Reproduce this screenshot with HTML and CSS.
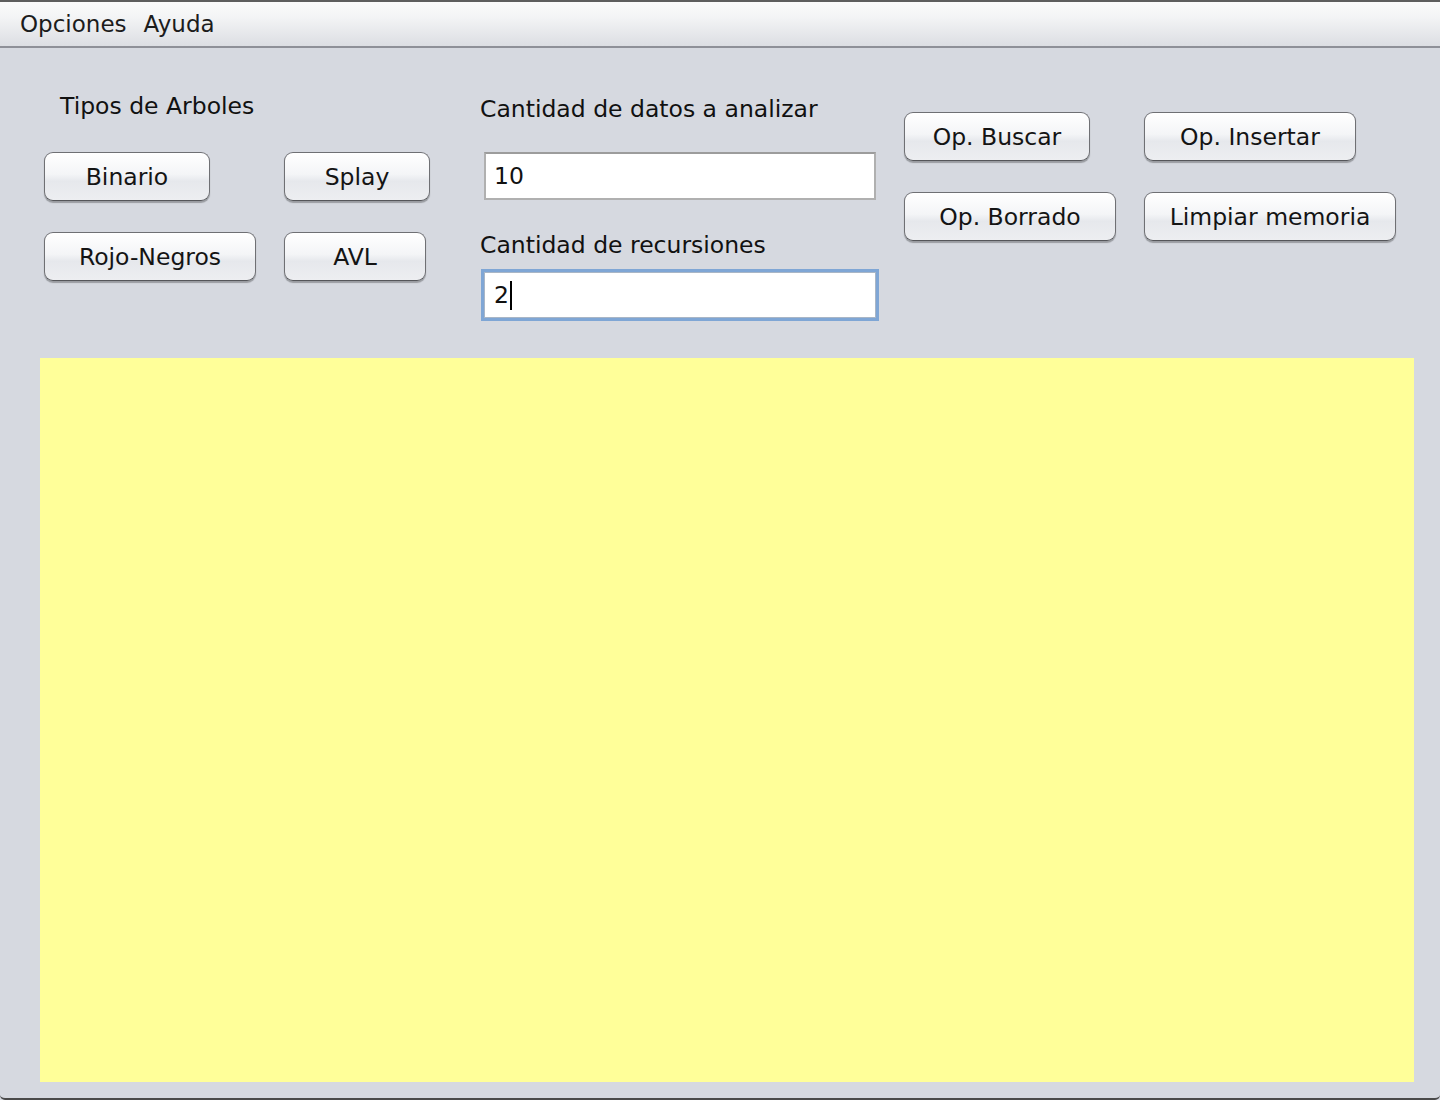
FILE: index.html
```html
<!DOCTYPE html>
<html lang="es">
<head>
<meta charset="utf-8">
<title>Arboles</title>
<link rel="stylesheet" href="styles.css">
</head>
<body>
<div class="window">
  <div class="menubar">
    <span class="menu-item">Opciones</span>
    <span class="menu-item">Ayuda</span>
  </div>
  <div class="top">
    <div class="col-left">
      <div class="label label-tipos">Tipos de Arboles</div>
      <div class="btn-grid btn-grid-left">
        <button class="btn w-binario">Binario</button>
        <button class="btn w-splay">Splay</button>
        <button class="btn w-rojo">Rojo-Negros</button>
        <button class="btn w-avl">AVL</button>
      </div>
    </div>
    <div class="col-mid">
      <div class="label label-datos">Cantidad de datos a analizar</div>
      <div class="field field-datos">10</div>
      <div class="label label-rec">Cantidad de recursiones</div>
      <div class="field field-rec focused">2<span class="caret"></span></div>
    </div>
    <div class="col-right">
      <div class="btn-grid btn-grid-right">
        <button class="btn w-buscar">Op. Buscar</button>
        <button class="btn w-insertar">Op. Insertar</button>
        <button class="btn w-borrado">Op. Borrado</button>
        <button class="btn w-limpiar">Limpiar memoria</button>
      </div>
    </div>
  </div>
  <div class="canvas"></div>
</div>
</body>
</html>
```
FILE: styles.css
```css
* { box-sizing: border-box; }
html, body {
  margin: 0;
  padding: 0;
  background: #d6d9e0;
}
body {
  font-family: "DejaVu Sans", "Liberation Sans", sans-serif;
  color: #111;
}
.window {
  width: 1440px;
  height: 1100px;
  background: #d6d9e0;
  border-top: 2px solid #5e5e5e;
  border-bottom: 2px solid #4a4a4a;
  border-radius: 0 0 5px 5px;
  display: flex;
  flex-direction: column;
  overflow: hidden;
}
.menubar {
  height: 46px;
  flex: none;
  background: linear-gradient(#fbfbfb 0%, #f3f4f5 35%, #dcdee3 100%);
  border-bottom: 2px solid #8e9098;
  display: flex;
  align-items: center;
  padding-left: 20px;
  gap: 17px;
  font-size: 23px;
  color: #1c1c1c;
  padding-bottom: 1px;
}
.menu-item { line-height: 28px; }
.top {
  height: 310px;
  flex: none;
  display: flex;
  padding-left: 44px;
}
.col-left { width: 436px; flex: none; }
.col-mid { width: 424px; flex: none; }
.col-right { flex: none; }
.label {
  font-size: 23.5px;
  line-height: 28px;
  color: #111;
  white-space: nowrap;
}
.label-tipos { margin-top: 44px; margin-left: 16px; }
.label-datos { margin-top: 47px; }
.label-rec { margin-top: 31px; }
.btn-grid {
  display: grid;
  grid-template-columns: 240px auto;
  grid-auto-rows: 50px;
  row-gap: 30px;
  justify-items: start;
}
.btn-grid-left { margin-top: 32px; }
.btn-grid-right { margin-top: 64px; }
.btn {
  font-family: inherit;
  font-size: 23.5px;
  line-height: 28px;
  color: #141414;
  height: 49px;
  padding: 0;
  border: 1.5px solid #6f7074;
  border-bottom-color: #55565a;
  border-radius: 9px;
  background: linear-gradient(#ffffff 0%, #f4f5f7 45%, #e6e8ec 60%, #edeef1 100%);
  box-shadow: 0 1.5px 1px rgba(0, 0, 0, 0.28);
  text-align: center;
}
.w-binario { width: 166px; }
.w-splay { width: 146px; }
.w-rojo { width: 212px; }
.w-avl { width: 142px; }
.w-buscar { width: 186px; }
.w-insertar { width: 212px; }
.w-borrado { width: 212px; }
.w-limpiar { width: 252px; }
.field {
  margin-left: 4px;
  width: 392px;
  background: #fff;
  font-size: 23.5px;
  line-height: 28px;
  color: #111;
  display: flex;
  align-items: center;
  padding-left: 8px;
}
.field-datos {
  margin-top: 29px;
  height: 48px;
  border: 2px solid #b0b0b0;
  border-top-color: #9c9c9c;
  padding-bottom: 1px;
}
.field-rec {
  margin-top: 13px;
  height: 46px;
  border: 1px solid #a9b6c6;
  box-shadow: 0 0 0 3px #7fa6d5;
  padding-left: 9px;
}
.caret {
  display: inline-block;
  width: 2px;
  height: 29px;
  background: #000;
  margin-left: 1px;
}
.canvas {
  margin-left: 40px;
  width: 1374px;
  height: 724px;
  flex: none;
  background: #ffff99;
}
```
